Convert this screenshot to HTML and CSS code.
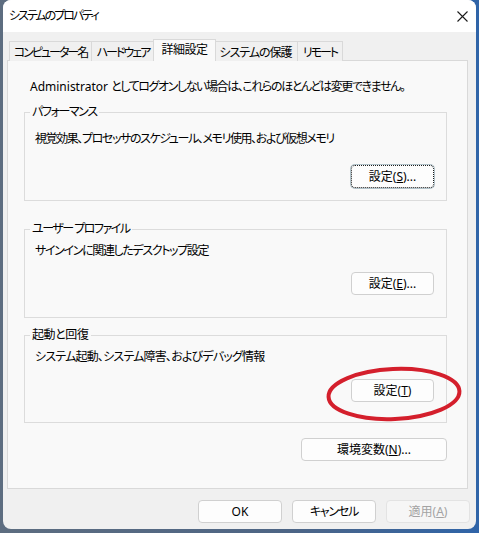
FILE: index.html
```html
<!DOCTYPE html>
<html lang="ja">
<head>
<meta charset="utf-8">
<title>システムのプロパティ</title>
<link rel="stylesheet" href="styles.css">
</head>
<body>
<div class="window">
  <div class="titlebar">
    <span class="title">システムのプロパティ</span>
    <svg class="close" width="11" height="11" viewBox="0 0 11 11"><path d="M0.5 0.5 L10.5 10.5 M10.5 0.5 L0.5 10.5" stroke="#1b1b1b" stroke-width="1.1" fill="none"/></svg>
  </div>
  <div class="body">
    <div class="tabs">
      <div class="tab t1">コンピューター名</div>
      <div class="tab t2">ハードウェア</div>
      <div class="tab t3 active">詳細設定</div>
      <div class="tab t4">システムの保護</div>
      <div class="tab t5">リモート</div>
    </div>
    <div class="panel">
      <p class="note">Administrator <span class="note-jp">としてログオンしない場合は、これらのほとんどは変更できません。</span></p>
      <fieldset class="group g1">
        <legend>パフォーマンス</legend>
        <p class="desc">視覚効果、プロセッサのスケジュール、メモリ使用、および仮想メモリ</p>
        <div class="actions"><button class="btn focus">設定(<u>S</u>)...</button></div>
      </fieldset>
      <fieldset class="group g2">
        <legend>ユーザー プロファイル</legend>
        <p class="desc">サインインに関連したデスクトップ設定</p>
        <div class="actions"><button class="btn">設定(<u>E</u>)...</button></div>
      </fieldset>
      <fieldset class="group g3">
        <legend>起動と回復</legend>
        <p class="desc">システム起動、システム障害、およびデバッグ情報</p>
        <div class="actions"><button class="btn">設定(<u>T</u>)</button></div>
      </fieldset>
      <div class="env-row"><button class="btn wide">環境変数(<u>N</u>)...</button></div>
    </div>
    <div class="footer">
      <button class="btn fbtn">OK</button>
      <button class="btn fbtn cancel">キャンセル</button>
      <button class="btn fbtn disabled">適用(<u>A</u>)</button>
    </div>
  </div>
  <svg class="annot" width="150" height="70" viewBox="0 0 150 70"><ellipse cx="75" cy="35" rx="65.5" ry="25" transform="rotate(-2.5 75 35)" fill="none" stroke="#d41f2c" stroke-width="4"/></svg>
</div>
</body>
</html>
```
FILE: styles.css
```css
html, body {
  margin: 0;
  height: 100%;
  overflow: hidden;
}
body {
  background: linear-gradient(to right, #5d6d80 0%, #4d6585 60%, #2f64a8 100%);
  font-family: "Noto Sans", "Noto Sans CJK JP", sans-serif;
  font-size: 12px;
  line-height: 16px;
  color: #000;
  font-feature-settings: "palt";
}
.window {
  position: relative;
  margin-left: 3px;
  width: 473px;
  height: 529px;
  background: #f0f0f0;
  border-radius: 8px;
  overflow: hidden;
}
.titlebar {
  height: 32px;
  background: #fff;
  display: flex;
  align-items: center;
  justify-content: space-between;
  padding: 0 8px 0 6px;
}
.title {
  font-size: 12px;
  letter-spacing: -2px;
}
.close {
  display: block;
}
.body {
  padding: 7px 8px 0 4px;
}
.tabs {
  display: flex;
  align-items: flex-end;
  height: 22px;
  margin-left: 2px;
  margin-bottom: -1px;
  position: relative;
  z-index: 1;
}
.tab {
  box-sizing: border-box;
  height: 20px;
  border: 1px solid #d9d9d9;
  border-bottom: none;
  background: #f0f0f0;
  text-align: center;
  padding-top: 3px;
  white-space: nowrap;
  margin-left: -1px;
  letter-spacing: -1.5px;
}
.tab:first-child {
  margin-left: 0;
}
.t1 { width: 83px; letter-spacing: -2px; }
.t2 { width: 64px; letter-spacing: -2px; }
.t4 { width: 85px; letter-spacing: -1px; }
.t5 { width: 46px; letter-spacing: -2px; }
.tab.active {
  width: 63px;
  height: 22px;
  padding-top: 2px;
  background: #f9f9f9;
  margin: 0 -2px 0 -2px;
  position: relative;
  z-index: 2;
  letter-spacing: -0.5px;
}
.panel {
  box-sizing: border-box;
  height: 429px;
  background: #f9f9f9;
  border: 1px solid #d9d9d9;
  padding: 18px 20px 0 16px;
}
.note {
  margin: 0 0 9px 6px;
  white-space: nowrap;
}
.note-jp {
  letter-spacing: -1.4px;
}
.group {
  margin: 0;
  border: 1px solid #dcdcdc;
  padding: 0 12px 0 10px;
  min-inline-size: 0;
}
.group legend {
  padding: 0 2px;
  margin-left: -5px;
}
.desc {
  margin: 6px 0 0 0;
  white-space: nowrap;
}
.actions {
  display: flex;
  justify-content: flex-end;
}
.g1 legend { letter-spacing: -1.4px; }
.g1 .desc { margin-top: 11px; letter-spacing: -1.4px; }
.g1 .actions { margin-top: 18px; padding-bottom: 12px; }
.g2 { margin-top: 20px; }
.g2 legend { letter-spacing: -1.5px; }
.g2 .desc { letter-spacing: -1.35px; }
.g2 .actions { margin-top: 13px; padding-bottom: 22px; }
.g3 { margin-top: 9px; }
.g3 legend { letter-spacing: -0.4px; }
.g3 .desc { letter-spacing: -0.8px; }
.g3 .actions { margin-top: 14px; padding-bottom: 20px; }
.btn {
  box-sizing: border-box;
  height: 23px;
  width: 83px;
  border: 1px solid #d0d0d0;
  border-radius: 4px;
  background: #fdfdfd;
  font-family: inherit;
  font-size: 12px;
  font-feature-settings: "palt";
  color: #000;
  padding: 0;
  line-height: 16px;
}
.btn.focus {
  border: 1px dotted #1c1c1c;
  box-shadow: 0 0 0 1px rgba(40, 90, 110, 0.35);
}
.btn.wide {
  width: 146px;
}
.env-row {
  display: flex;
  justify-content: flex-end;
  margin-top: 15px;
}
.footer {
  display: flex;
  justify-content: flex-end;
  gap: 10px;
  margin-top: 11px;
  margin-right: -2px;
}
.fbtn {
  width: 84px;
}
.btn.cancel {
  letter-spacing: -1.2px;
}
.btn.disabled {
  color: #a3a3a3;
  background: #f6f6f6;
  border-color: #e3e3e3;
}
.annot {
  position: absolute;
  left: 316px;
  top: 359px;
}
```
